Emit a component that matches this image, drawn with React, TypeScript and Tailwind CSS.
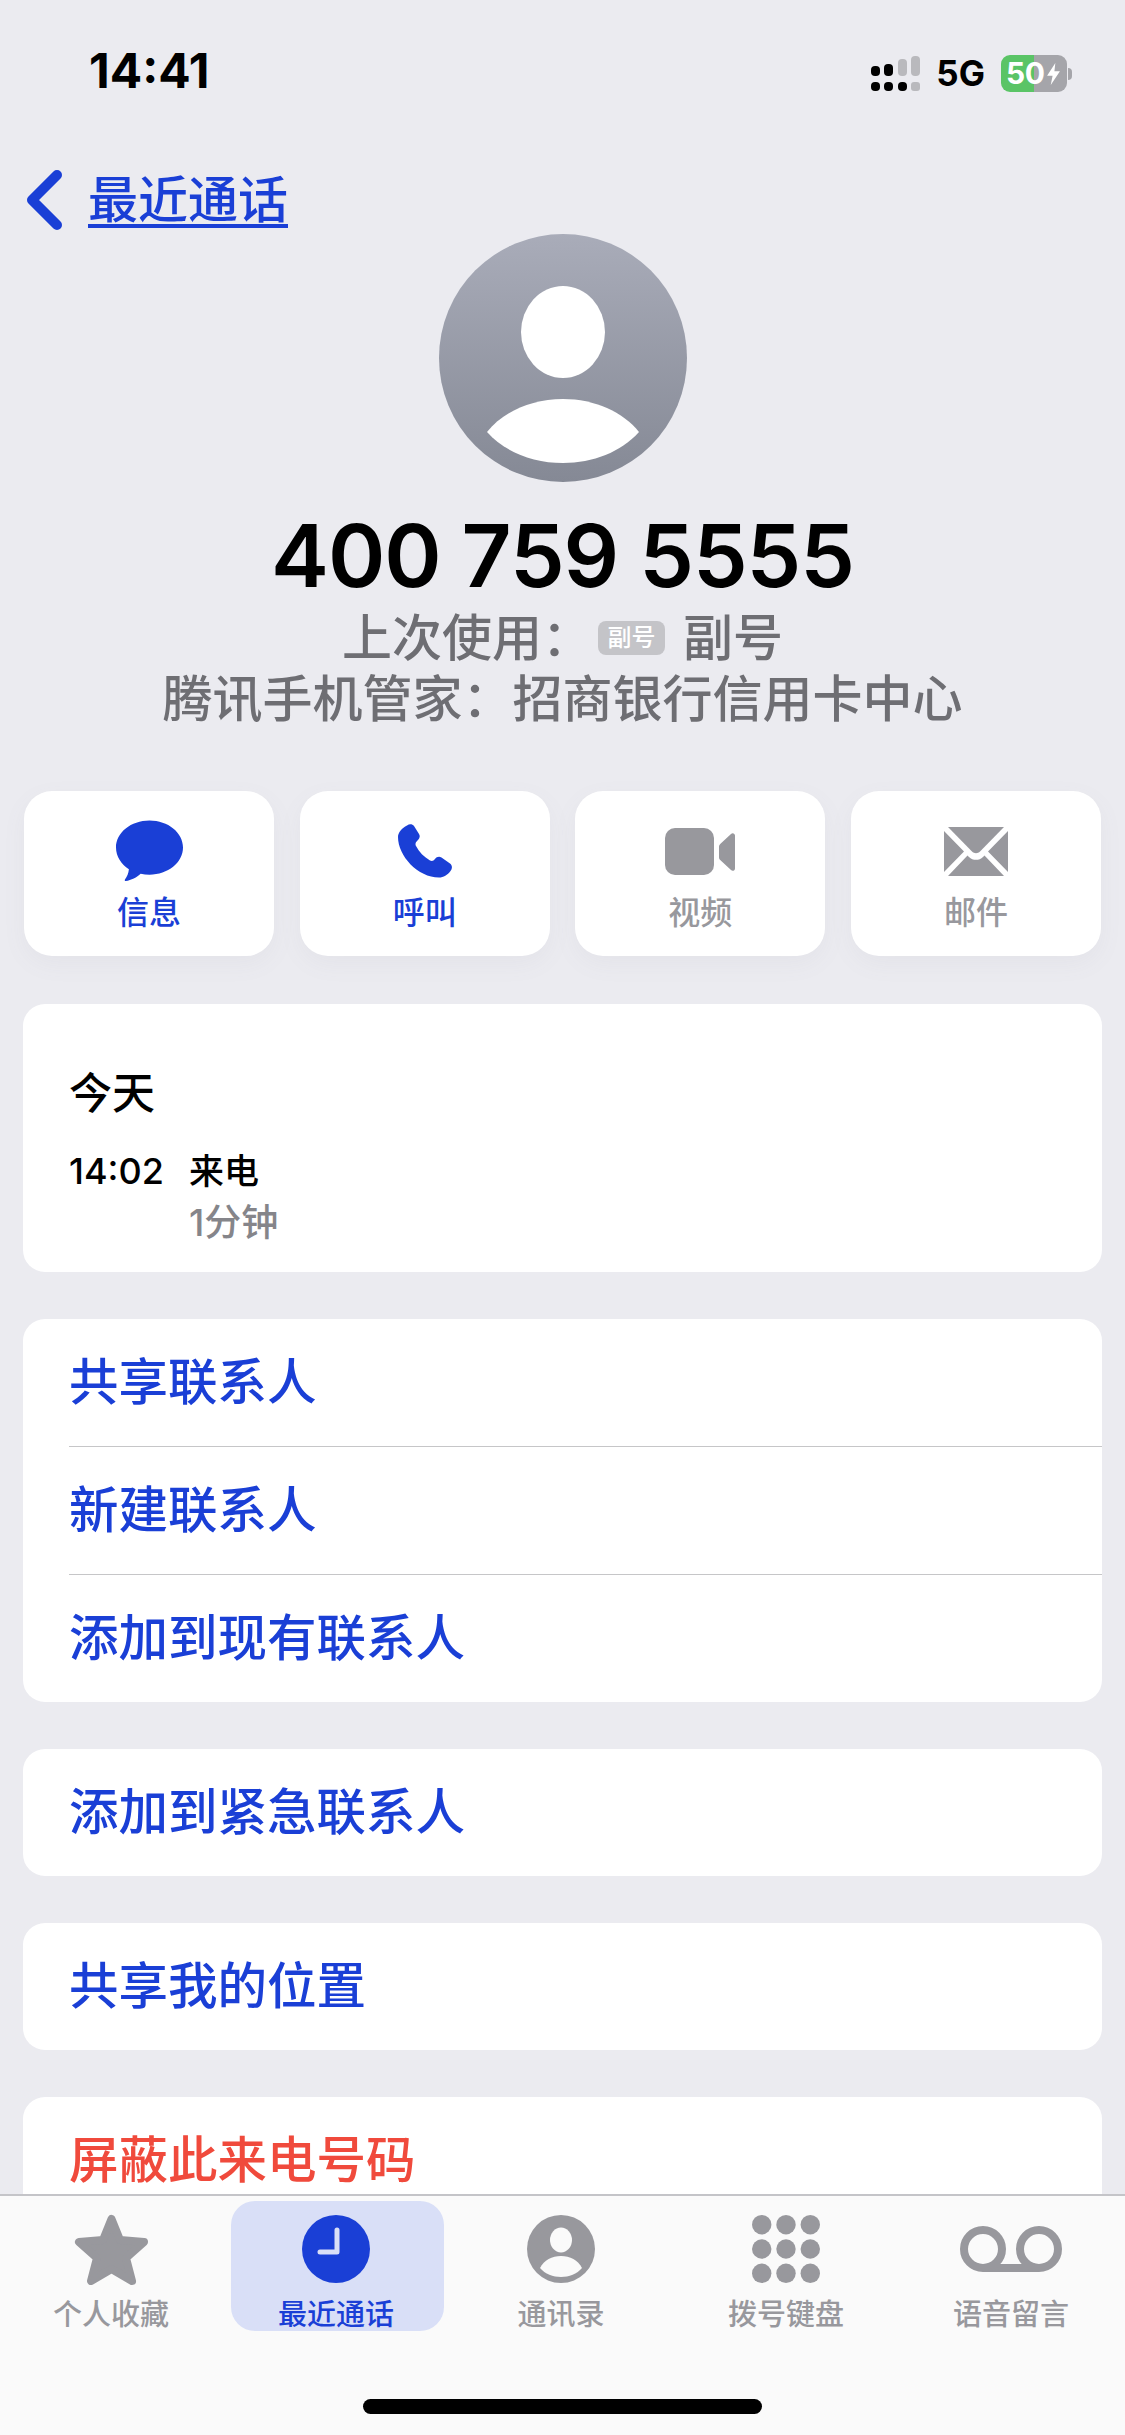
const cjk = "font-['Inter','Noto_Sans_CJK_SC',sans-serif]"

function Signal() {
  const on = 'bg-black'
  const off = 'bg-[#b9b9bd]'
  return (
    <div className="flex items-end gap-[4.5px]">
      <div className="flex flex-col gap-[6px]">
        <div className={`h-[10px] w-[9px] rounded-[4px] ${on}`} />
        <div className={`h-[9px] w-[9px] rounded-[4px] ${on}`} />
      </div>
      <div className="flex flex-col gap-[6px]">
        <div className={`h-[12px] w-[9px] rounded-[4px] ${on}`} />
        <div className={`h-[9px] w-[9px] rounded-[4px] ${on}`} />
      </div>
      <div className="flex flex-col gap-[6px]">
        <div className={`h-[17px] w-[9px] rounded-[4px] ${off}`} />
        <div className={`h-[9px] w-[9px] rounded-[4px] ${on}`} />
      </div>
      <div className="flex flex-col gap-[6px]">
        <div className={`h-[20px] w-[9px] rounded-[4px] ${off}`} />
        <div className={`h-[9px] w-[9px] rounded-[3px] ${off}`} />
      </div>
    </div>
  )
}

function Battery() {
  return (
    <div className="flex items-center gap-[1px]">
      <div className="flex h-[37px] w-[66px] items-center rounded-[9px] bg-[linear-gradient(90deg,#5ac466_50%,#a5a5aa_50%)] pl-[5px]">
        <span className="font-['Inter',sans-serif] text-[30px] font-bold leading-[37px] tracking-[-0.5px] text-white">50</span>
        <svg viewBox="0 0 16 24" className="ml-[2px] h-[22px] w-[15px]" fill="#fff">
          <path d="M10 0 1 14h6L5 24l10-15H9z" />
        </svg>
      </div>
      <div className="h-[12px] w-[4px] rounded-r-full bg-[#a5a5aa]" />
    </div>
  )
}

function ActionCard({ label, active, children }: { label: string; active?: boolean; children: React.ReactNode }) {
  return (
    <div className="flex h-[165px] flex-1 flex-col items-center rounded-[28px] bg-white pt-[27px] shadow-[0_8px_24px_rgba(120,120,140,0.06)]">
      <div className="flex h-[66px] w-full items-center justify-center">{children}</div>
      <div className={`mt-[9px] text-[32px] font-medium leading-[40px] ${active ? 'text-[#1a3fd6]' : 'text-[#98989d]'}`}>{label}</div>
    </div>
  )
}

function Row({ label, color = 'text-[#1a3fd6]' }: { label: string; color?: string }) {
  return <div className={`flex h-[127px] items-center pl-[46px] text-[49.5px] font-medium leading-none ${color}`}>{label}</div>
}

function Tab({ label, active, children }: { label: string; active?: boolean; children: React.ReactNode }) {
  return (
    <div className="flex w-[225px] justify-center">
      <div className={`flex h-[130px] w-[213px] flex-col items-center rounded-[24px] pr-[3px] pt-[13px] ${active ? 'bg-[#d9dff7]' : ''}`}>
        <div className="flex h-[70px] w-full items-center justify-center">{children}</div>
        <div className={`mt-[15px] text-[29px] font-medium leading-[32px] ${active ? 'text-[#1a3fd6]' : 'text-[#98989d]'}`}>{label}</div>
      </div>
    </div>
  )
}

export default function App() {
  return (
    <div className={`flex h-[2435px] w-[1125px] flex-col overflow-hidden bg-[#ebebf0] ${cjk}`}>
      <div className="min-h-0 flex-1 overflow-hidden">
        {/* status bar */}
        <div className="flex h-[96px] items-end justify-between pl-[89px] pr-[53px]">
          <span className="text-[48px] font-bold leading-[50px] text-black">14:41</span>
          <div className="flex items-center gap-[16px] pb-[4px]">
            <Signal />
            <span className="text-[35px] font-bold leading-none text-black">5G</span>
            <Battery />
          </div>
        </div>

        {/* back */}
        <div className="mt-[74px] flex items-center pl-[26px]">
          <svg viewBox="0 0 36 60" className="h-[60px] w-[36px]" fill="none" stroke="#1a3fd6" strokeWidth="10" strokeLinecap="round" strokeLinejoin="round">
            <path d="M31 5 6 30l25 25" />
          </svg>
          <span className="ml-[26px] text-[50px] font-medium leading-[60px] text-[#1a3fd6] underline decoration-[4px] underline-offset-[6px]">最近通话</span>
        </div>

        {/* avatar */}
        <div className="mt-[4px] flex justify-center">
          <div className="h-[248px] w-[248px] overflow-hidden rounded-full bg-gradient-to-b from-[#a9acb9] to-[#858995]">
            <svg viewBox="0 0 248 248" className="h-full w-full" fill="#fff">
              <ellipse cx="124" cy="98" rx="42" ry="46" />
              <path d="M48 198C64 178 92 165 124 165s60 13 76 33c-18 20-46 31-76 31s-58-11-76-31z" />
            </svg>
          </div>
        </div>

        {/* number */}
        <div className="mt-[24px] text-center text-[87px] font-semibold leading-[100px] tracking-[-1px] text-black">400 759 5555</div>
        <div className="mt-[6px] flex h-[52px] items-center justify-center text-[50px] font-medium leading-[52px] text-[#6e6e73]">
          <span>上次使用：</span>
          <span className="ml-[6px] mr-[18px] flex h-[34px] w-[67px] items-center justify-center rounded-[8px] bg-[#c4c4c8] text-[24px] font-medium leading-none text-white">副号</span>
          <span>副号</span>
        </div>
        <div className="mt-[5px] text-center text-[50px] font-medium leading-[60px] text-[#6e6e73]">腾讯手机管家：招商银行信用卡中心</div>

        {/* actions */}
        <div className="mt-[62px] flex gap-[25.5px] px-[24px]">
          <ActionCard label="信息" active>
            <svg viewBox="0 0 68 62" className="h-[62px] w-[67px]" fill="#1a3fd6">
              <path d="M34 0c18.800 0 34 12.300 34 27.500S52.800 55 34 55c-3.100 0-6.100-.3-9-1-3.600 3.700-9.800 6.600-15 7.400-1 .1-1.500-.9-.9-1.600 2-2.600 3.600-6 4-10.300C5.300 44.400 0 36.500 0 27.500 0 12.300 15.200 0 34 0z" />
            </svg>
          </ActionCard>
          <ActionCard label="呼叫" active>
            <svg viewBox="0 0 54 54" className="h-[54px] w-[54px]" fill="#1a3fd6">
              <path d="M9 1.500C11.500-.5 14.500 0 16 2l5 8c1.500 2.500.5 4.500-1.500 6.500S17 20 18 22c3 6 8 11 14 14.500 2 1 3.500.5 5-1.500s4-3 6.500-1.500l8.500 6c2.500 2 2.500 5 .5 7.500-3 4-7 6.500-11.500 6.500C20 53.500 0 32 0 13 0 8.500 4 4 9 1.500z" />
            </svg>
          </ActionCard>
          <ActionCard label="视频">
            <svg viewBox="0 0 70 47" className="h-[47px] w-[70px]" fill="#98989d">
              <rect x="0" y="0" width="49" height="47" rx="10" />
              <path d="M54 18.500c0-1 .4-1.900 1.200-2.600l10.800-10c1.600-1.400 4-.4 4 1.700v32.800c0 2.100-2.400 3.100-4 1.700l-10.800-10c-.8-.7-1.200-1.600-1.200-2.600z" />
            </svg>
          </ActionCard>
          <ActionCard label="邮件">
            <svg viewBox="0 0 64 49" className="h-[49px] w-[64px]" fill="#98989d">
              <path d="M4 0h56L36 24.500c-2.200 2.200-5.800 2.200-8 0z" />
              <path d="M0 4v41l20-20.500zM64 4v41L44 24.500z" />
              <path d="M4 49l19.500-20.500 1.500 1.500c3.800 3.800 10.200 3.800 14 0l1.500-1.500L60 49z" />
            </svg>
          </ActionCard>
        </div>

        {/* call history */}
        <div className="mx-[23px] mt-[48px] h-[268px] rounded-[22px] bg-white pl-[46px] pt-[64px]">
          <div className="text-[43px] font-medium leading-[50px] text-black">今天</div>
          <div className="mt-[31px] flex items-center text-[35px] leading-[44px]">
            <span className="w-[120px] text-[36px] font-medium text-black">14:02</span>
            <span className="font-medium text-black">来电</span>
          </div>
          <div className="mt-[8px] pl-[120px] text-[37px] font-medium leading-[44px] text-[#85858a]">1分钟</div>
        </div>

        <div className="mx-[23px] mt-[47px] overflow-hidden rounded-[22px] bg-white">
          <Row label="共享联系人" />
          <div className="ml-[46px] h-px bg-[#c6c6c8]" />
          <Row label="新建联系人" />
          <div className="ml-[46px] h-px bg-[#c6c6c8]" />
          <Row label="添加到现有联系人" />
        </div>

        <div className="mx-[23px] mt-[47px] rounded-[22px] bg-white">
          <Row label="添加到紧急联系人" />
        </div>

        <div className="mx-[23px] mt-[47px] rounded-[22px] bg-white">
          <Row label="共享我的位置" />
        </div>

        <div className="mx-[23px] mt-[47px] rounded-[22px] bg-white">
          <Row label="屏蔽此来电号码" color="text-[#f04a3c]" />
        </div>
      </div>

      {/* tab bar */}
      <div className="relative h-[241px] shrink-0 border-t-[2px] border-[#c4c4c8] bg-[#fafafa] pt-[5px]">
        <div className="flex justify-center">
          <Tab label="个人收藏">
            <svg viewBox="0 0 75 71" className="h-[71px] w-[75px]" fill="#98989d" stroke="#98989d" strokeWidth="8" strokeLinejoin="round">
              <path d="M37.500 5 46 26l24 2-18 16 6 23-20.500-12L17 67l6-23L5 28l24-2z" />
            </svg>
          </Tab>
          <Tab label="最近通话" active>
            <svg viewBox="0 0 68 68" className="h-[68px] w-[68px]">
              <circle cx="34" cy="34" r="34" fill="#1a3fd6" />
              <path d="M35 15v22H18" fill="none" stroke="#d9dff7" strokeWidth="5" strokeLinecap="round" strokeLinejoin="round" />
            </svg>
          </Tab>
          <Tab label="通讯录">
            <svg viewBox="0 0 68 68" className="h-[68px] w-[68px]">
              <circle cx="34" cy="34" r="34" fill="#98989d" />
              <ellipse cx="34" cy="25" rx="11" ry="12.500" fill="#fafafa" />
              <path d="M13 53c4-8 12-12 21-12s17 4 21 12c-5 6-13 9-21 9s-16-3-21-9z" fill="#fafafa" />
            </svg>
          </Tab>
          <Tab label="拨号键盘">
            <svg viewBox="0 0 70 70" className="h-[68px] w-[70px]" fill="#98989d">
              <circle cx="10" cy="10" r="10" />
              <circle cx="35" cy="10" r="10" />
              <circle cx="60" cy="10" r="10" />
              <circle cx="10" cy="35" r="10" />
              <circle cx="35" cy="35" r="10" />
              <circle cx="60" cy="35" r="10" />
              <circle cx="10" cy="60" r="10" />
              <circle cx="35" cy="60" r="10" />
              <circle cx="60" cy="60" r="10" />
            </svg>
          </Tab>
          <Tab label="语音留言">
            <svg viewBox="0 0 102 46" className="h-[46px] w-[102px]" fill="none" stroke="#98989d" strokeWidth="8">
              <circle cx="23" cy="23" r="19" />
              <circle cx="79" cy="23" r="19" />
              <path d="M23 42h56" />
            </svg>
          </Tab>
        </div>
        <div className="absolute bottom-[21px] left-[363px] h-[15px] w-[399px] rounded-full bg-black" />
      </div>
    </div>
  )
}
